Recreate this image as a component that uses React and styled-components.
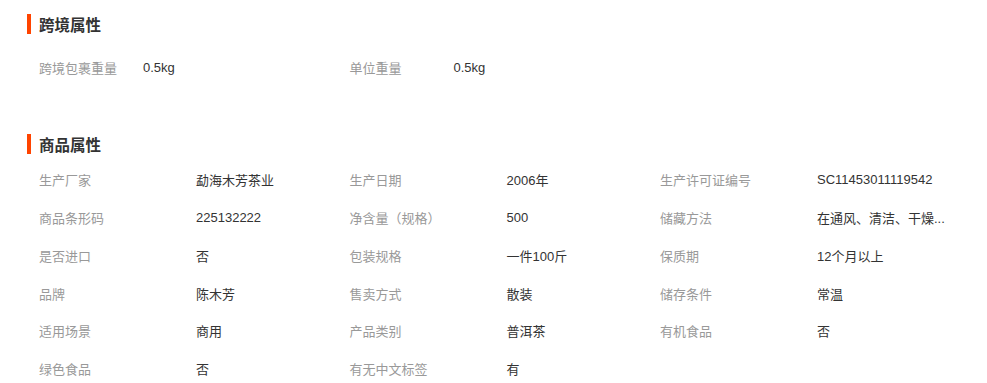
import React from "react";
import styled, { createGlobalStyle } from "styled-components";

const GlobalStyle = createGlobalStyle`
  body {
    margin: 0;
    background: #ffffff;
    font-family: "Liberation Sans", "Noto Sans CJK SC", sans-serif;
  }
`;

// 전체
const Page = styled.div`
  width: 987px;
  padding: 14px 0 0 27px;
  box-sizing: border-box;
`;

const Section = styled.section`
  margin-bottom: ${(p) => p.$gap || 0}px;
`;

// 제목 + 주황 막대
const Title = styled.h3`
  margin: 0;
  height: 20px;
  line-height: 20px;
  border-left: 4px solid #ff4400;
  padding-left: 8px;
  font-size: 15.5px;
  font-weight: bold;
  color: #333333;
  font-family: "Noto Sans CJK SC", sans-serif;
`;

const Grid = styled.div`
  display: grid;
  grid-template-columns: repeat(3, ${(p) => p.$label}px ${(p) => 310.5 - p.$label}px);
  grid-auto-rows: 37.8px;
  padding-left: 12px;
  margin-top: ${(p) => p.$top}px;
  font-size: 13px;
  align-items: center;
`;

const Label = styled.div`
  color: #999999;
  white-space: nowrap;
`;

const Value = styled.div`
  color: #333333;
  white-space: nowrap;
`;

const crossBorder = [
  ["跨境包裹重量", "0.5kg"],
  ["单位重量", "0.5kg"],
];

const goods = [
  ["生产厂家", "勐海木芳茶业"],
  ["生产日期", "2006年"],
  ["生产许可证编号", "SC11453011119542"],
  ["商品条形码", "225132222"],
  ["净含量（规格）", "500"],
  ["储藏方法", "在通风、清洁、干燥..."],
  ["是否进口", "否"],
  ["包装规格", "一件100斤"],
  ["保质期", "12个月以上"],
  ["品牌", "陈木芳"],
  ["售卖方式", "散装"],
  ["储存条件", "常温"],
  ["适用场景", "商用"],
  ["产品类别", "普洱茶"],
  ["有机食品", "否"],
  ["绿色食品", "否"],
  ["有无中文标签", "有"],
];

const renderItems = (list) =>
  list.map(([k, v]) => (
    <React.Fragment key={k}>
      <Label>{k}</Label>
      <Value>{v}</Value>
    </React.Fragment>
  ));

const App = () => {
  return (
    <>
      <GlobalStyle />
      <Page>
        <Section $gap={47}>
          <Title>跨境属性</Title>
          <Grid $label={104} $top={15}>
            {renderItems(crossBorder)}
          </Grid>
        </Section>
        <Section>
          <Title>商品属性</Title>
          <Grid $label={157} $top={7}>
            {renderItems(goods)}
          </Grid>
        </Section>
      </Page>
    </>
  );
};

export default App;
